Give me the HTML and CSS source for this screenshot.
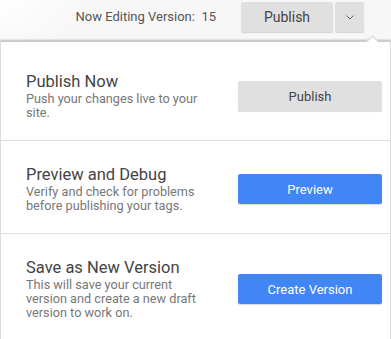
FILE: index.html
```html
<!DOCTYPE html>
<html lang="en">
<head>
    <meta charset="UTF-8">
    <meta name="viewport" content="width=device-width, initial-scale=1.0">
    <title>Publish</title>
    <link rel="stylesheet" href="styles.css">
</head>
<body>

    <!-- Barra superior -->
    <div class="topbar">
        <span class="version">Now Editing Version:&nbsp; 15</span>
        <div class="btn-group">
            <button class="btn btn-gray top-publish">Publish</button>
            <button class="btn btn-gray caret">
                <svg width="8" height="5" viewBox="0 0 8 5"><polyline points="0.5,0.5 4,4 7.5,0.5" fill="none" stroke="#666" stroke-width="1"/></svg>
            </button>
        </div>
    </div>

    <!-- Menu de publicação -->
    <div class="panel">
        <div class="section first">
            <div class="text">
                <div class="title">Publish Now</div>
                <div class="desc">Push your changes live to your site.</div>
            </div>
            <button class="btn btn-gray action">Publish</button>
        </div>
        <div class="section">
            <div class="text">
                <div class="title">Preview and Debug</div>
                <div class="desc">Verify and check for problems before publishing your tags.</div>
            </div>
            <button class="btn btn-blue action">Preview</button>
        </div>
        <div class="section">
            <div class="text">
                <div class="title">Save as New Version</div>
                <div class="desc">This will save your current version and create a new draft version to work on.</div>
            </div>
            <button class="btn btn-blue action">Create Version</button>
        </div>
    </div>

</body>
</html>
```

FILE: styles.css
```css
body {
    margin: 0;
    font-family: Roboto, "Liberation Sans", sans-serif;
    background: #fff;
    overflow: hidden;
}

.topbar {
    height: 41px;
    display: flex;
    justify-content: flex-end;
    align-items: flex-start;
    padding: 2px 27px 0 0;
    box-sizing: border-box;
    background: radial-gradient(ellipse 90px 50px at 0 0, #fff, #f7f7f7);
    background-color: #f7f7f7;
}

.version {
    font-size: 13px;
    color: #555;
    line-height: 30px;
    margin-right: 25px;
}

.btn-group {
    display: flex;
    gap: 2px;
}

.btn {
    font-family: Roboto, "Liberation Sans", sans-serif;
    font-size: 13px;
    border: none;
    border-radius: 2px;
    height: 30px;
    padding: 0;
    cursor: pointer;
    box-shadow: 0 1px 1px rgba(0, 0, 0, 0.15);
}

.btn-gray {
    background: #e0e0e0;
    color: #444;
}

.btn-blue {
    background: #4285f4;
    color: #fff;
}

.top-publish {
    width: 92px;
    font-size: 14px;
}

.caret {
    width: 29px;
    display: flex;
    align-items: center;
    justify-content: center;
}

.panel {
    position: relative;
    border-left: 1px solid #ddd;
    border-right: 1px solid #ddd;
    border-top: 1px solid #c8c8c8;
    box-shadow: 0 -1px 2px rgba(0, 0, 0, 0.25);
    background: #fff;
}

.panel::before {
    content: "";
    position: absolute;
    top: -5px;
    left: 367px;
    width: 8px;
    height: 8px;
    background: #fff;
    border-left: 1px solid #ccc;
    border-top: 1px solid #ccc;
    transform: rotate(45deg);
}

.section {
    display: flex;
    align-items: center;
    gap: 32px;
    padding: 24px 8px 20px 25px;
    border-bottom: 1px solid #e0e0e0;
}

.section.first {
    padding-top: 30px;
}

.text {
    flex: 1;
}

.title {
    font-size: 16.5px;
    line-height: 20px;
    color: #444;
}

.desc {
    font-size: 12.7px;
    line-height: 14px;
    color: #777;
}

.action {
    width: 144px;
    flex-shrink: 0;
}
```
